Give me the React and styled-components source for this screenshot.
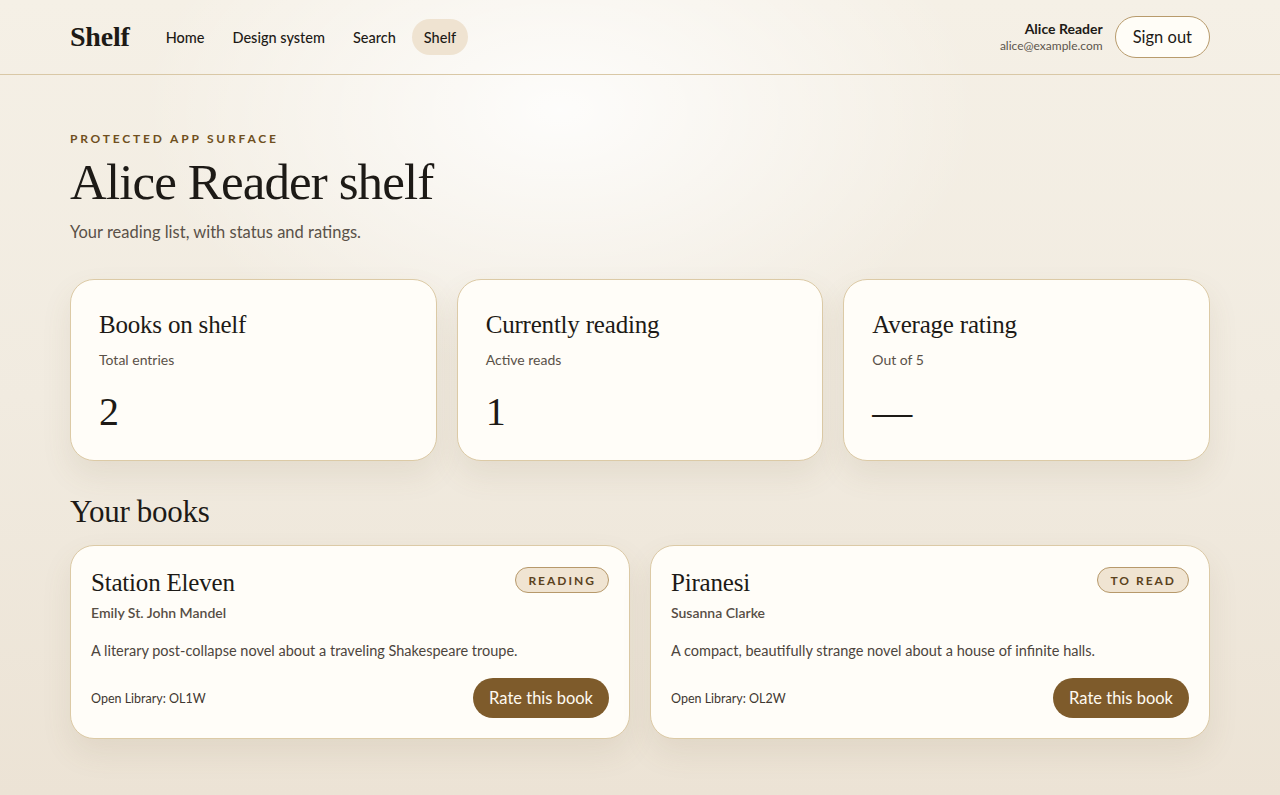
import React from 'react';
import styled, { createGlobalStyle } from 'styled-components';

const sans = `'Lato', 'Open Sans', sans-serif`;
const serif = `'Liberation Serif', 'DejaVu Serif', serif`;

const GlobalStyle = createGlobalStyle`
  html, body {
    margin: 0;
    padding: 0;
  }
  body {
    min-height: 795px;
    font-family: ${sans};
    color: #1d1a16;
    background:
      radial-gradient(ellipse 420px 260px at 560px 110px, rgba(255, 255, 255, 0.85), rgba(255, 255, 255, 0) 100%),
      linear-gradient(180deg, #f5f0e6 0%, #f1ebe0 50%, #ece3d5 100%);
    background-repeat: no-repeat;
    background-attachment: fixed;
  }
  * {
    box-sizing: border-box;
  }
`;

// 상단 바
const Header = styled.header`
  height: 75px;
  border-bottom: 1px solid #d9c8a6;
`;

const HeaderInner = styled.div`
  max-width: 1140px;
  height: 100%;
  margin: 0 auto;
  display: flex;
  align-items: center;
  justify-content: space-between;
`;

const Brand = styled.div`
  display: flex;
  align-items: center;
  gap: 24px;
`;

const Logo = styled.span`
  font-family: ${serif};
  font-weight: 700;
  font-size: 28px;
  letter-spacing: -0.2px;
  color: #1d1a16;
`;

const Nav = styled.nav`
  display: flex;
  align-items: center;
  gap: 4px;
`;

const NavItem = styled.a`
  display: flex;
  align-items: center;
  height: 36px;
  padding: 0 12px;
  border-radius: 18px;
  font-size: 14.5px;
  font-weight: 500;
  color: #1d1a16;
  text-decoration: none;
  background: ${({ $active }) => ($active ? '#efe3d1' : 'transparent')};
`;

const Account = styled.div`
  display: flex;
  align-items: center;
  gap: 12px;
`;

const Who = styled.div`
  display: flex;
  flex-direction: column;
  align-items: flex-end;
  line-height: 1.3;
`;

const WhoName = styled.span`
  font-size: 14px;
  font-weight: 700;
`;

const WhoMail = styled.span`
  font-size: 12px;
  color: #5d554c;
`;

const OutlineButton = styled.button`
  height: 42px;
  padding: 0 17px;
  border: 1px solid #b89b6c;
  border-radius: 21px;
  background: #fffdf7;
  font-family: ${sans};
  font-size: 16.5px;
  color: #1d1a16;
`;

// 본문
const Main = styled.main`
  max-width: 1140px;
  margin: 0 auto;
  padding: 56px 0 40px;
`;

const Eyebrow = styled.div`
  font-size: 12px;
  font-weight: 700;
  letter-spacing: 2.8px;
  text-transform: uppercase;
  color: #6f4f20;
`;

const Title = styled.h1`
  margin: 8px 0 0;
  font-family: ${serif};
  font-weight: 400;
  font-size: 51px;
  line-height: 1.1;
  letter-spacing: -0.9px;
  color: #1d1a16;
`;

const Lead = styled.p`
  margin: 12px 0 0;
  font-size: 16.5px;
  color: #5a5148;
`;

const StatGrid = styled.div`
  margin-top: 37px;
  display: grid;
  grid-template-columns: repeat(3, 1fr);
  gap: 20px;
`;

const Card = styled.div`
  background: #fffdf8;
  border: 1px solid #dccaa6;
  border-radius: 24px;
  box-shadow: 0 14px 30px rgba(120, 95, 55, 0.1);
`;

const StatCard = styled(Card)`
  height: 182px;
  padding: 29px 28px;
`;

const CardTitle = styled.h3`
  margin: 0;
  font-family: ${serif};
  font-weight: 400;
  font-size: 25px;
  line-height: 32px;
  letter-spacing: -0.2px;
  color: #1d1a16;
`;

const StatNote = styled.div`
  margin-top: 10px;
  font-size: 14px;
  color: #5a5148;
`;

const StatValue = styled.div`
  margin-top: 20px;
  font-family: ${serif};
  font-size: 40px;
  line-height: 48px;
  color: #1d1a16;
`;

const SectionTitle = styled.h2`
  margin: 32px 0 0;
  font-family: ${serif};
  font-weight: 400;
  font-size: 31px;
  line-height: 38px;
  letter-spacing: -0.3px;
  color: #1d1a16;
`;

const BookGrid = styled.div`
  margin-top: 14px;
  display: grid;
  grid-template-columns: repeat(2, 1fr);
  gap: 20px;
`;

const BookCard = styled(Card)`
  height: 194px;
  padding: 21px 20px 20px 20px;
  display: flex;
  flex-direction: column;
`;

const BookHead = styled.div`
  display: flex;
  justify-content: space-between;
  align-items: flex-start;
`;

const Badge = styled.span`
  height: 26px;
  padding: 0 12px;
  display: inline-flex;
  align-items: center;
  border: 1px solid #b7996b;
  border-radius: 13px;
  background: #f0e4d2;
  font-size: 12px;
  font-weight: 700;
  letter-spacing: 2px;
  text-transform: uppercase;
  color: #5b421d;
`;

const Author = styled.div`
  margin-top: 5px;
  font-size: 14px;
  font-weight: 600;
  color: #574e45;
`;

const Blurb = styled.p`
  margin: 21px 0 0;
  font-size: 14.5px;
  color: #4d453d;
`;

const BookFoot = styled.div`
  margin-top: auto;
  display: flex;
  justify-content: space-between;
  align-items: center;
`;

const Source = styled.span`
  font-size: 12.5px;
  color: #3f3831;
`;

const PrimaryButton = styled.button`
  height: 40px;
  padding: 0 16px;
  border: none;
  border-radius: 20px;
  background: #7e5b2b;
  font-family: ${sans};
  font-size: 16.5px;
  color: #fffaf0;
`;

const stats = [
  { title: 'Books on shelf', note: 'Total entries', value: '2' },
  { title: 'Currently reading', note: 'Active reads', value: '1' },
  { title: 'Average rating', note: 'Out of 5', value: '—' },
];

const books = [
  {
    title: 'Station Eleven',
    author: 'Emily St. John Mandel',
    status: 'Reading',
    blurb: 'A literary post-collapse novel about a traveling Shakespeare troupe.',
    id: 'OL1W',
  },
  {
    title: 'Piranesi',
    author: 'Susanna Clarke',
    status: 'To read',
    blurb: 'A compact, beautifully strange novel about a house of infinite halls.',
    id: 'OL2W',
  },
];

export default function App() {
  return (
    <>
      <GlobalStyle />
      <Header>
        <HeaderInner>
          <Brand>
            <Logo>Shelf</Logo>
            <Nav>
              <NavItem>Home</NavItem>
              <NavItem>Design system</NavItem>
              <NavItem>Search</NavItem>
              <NavItem $active>Shelf</NavItem>
            </Nav>
          </Brand>
          <Account>
            <Who>
              <WhoName>Alice Reader</WhoName>
              <WhoMail>alice@example.com</WhoMail>
            </Who>
            <OutlineButton>Sign out</OutlineButton>
          </Account>
        </HeaderInner>
      </Header>
      <Main>
        <Eyebrow>Protected app surface</Eyebrow>
        <Title>Alice Reader shelf</Title>
        <Lead>Your reading list, with status and ratings.</Lead>

        <StatGrid>
          {stats.map((s) => (
            <StatCard key={s.title}>
              <CardTitle>{s.title}</CardTitle>
              <StatNote>{s.note}</StatNote>
              <StatValue>{s.value}</StatValue>
            </StatCard>
          ))}
        </StatGrid>

        <SectionTitle>Your books</SectionTitle>
        <BookGrid>
          {books.map((b) => (
            <BookCard key={b.id}>
              <BookHead>
                <CardTitle>{b.title}</CardTitle>
                <Badge>{b.status}</Badge>
              </BookHead>
              <Author>{b.author}</Author>
              <Blurb>{b.blurb}</Blurb>
              <BookFoot>
                <Source>Open Library: {b.id}</Source>
                <PrimaryButton>Rate this book</PrimaryButton>
              </BookFoot>
            </BookCard>
          ))}
        </BookGrid>
      </Main>
    </>
  );
}
